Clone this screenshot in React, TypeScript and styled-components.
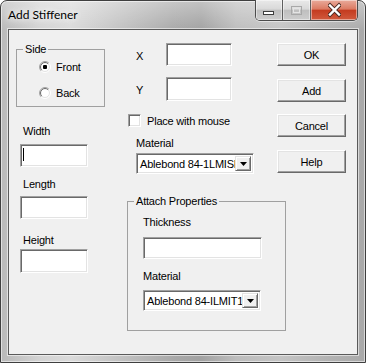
import React from "react";
import styled, { createGlobalStyle } from "styled-components";

const GlobalStyle = createGlobalStyle`
  html, body {
    margin: 0;
    padding: 0;
    background: #ffffff;
  }
  body {
    font-family: "Liberation Sans", Arial, sans-serif;
    font-size: 11px;
    letter-spacing: -0.2px;
    color: #000;
  }
`;

const Window = styled.div`
  width: 366px;
  height: 363px;
  box-sizing: border-box;
  padding: 0 7px 7px;
  display: flex;
  flex-direction: column;
  border: 1px solid #3f3f3f;
  border-radius: 7px 7px 0 0;
  background:
    linear-gradient(180deg, rgba(255, 255, 255, 0.35) 0, rgba(255, 255, 255, 0) 30px),
    linear-gradient(
      90deg,
      #b9b9b9 0,
      #d4d4d4 40px,
      #dadada 70px,
      #c2c2c2 120px,
      #a8a8a8 175px,
      #a2a2a2 200px,
      #bdbdbd 235px,
      #c4c4c4 280px,
      #b2b2b2 330px,
      #a9a9a9 366px
    );
  box-shadow: inset 0 0 0 1px rgba(255, 255, 255, 0.55);
`;

const TitleBar = styled.div`
  height: 28px;
  flex-shrink: 0;
  display: flex;
  align-items: flex-start;
`;

const Title = styled.div`
  flex: 1;
  margin-top: 6px;
  font-family: Lato, "Open Sans", sans-serif;
  font-size: 12px;
  line-height: 16px;
  letter-spacing: 0;
  color: #000;
  text-shadow: 0 0 6px #fff, 0 0 10px rgba(255, 255, 255, 0.9);
`;

const Controls = styled.div`
  display: flex;
  margin-top: -1px;
  height: 20px;
  border: 1px solid #4c4c4c;
  border-top: none;
  border-radius: 0 0 5px 5px;
  overflow: hidden;
  box-shadow: 0 1px 0 rgba(255, 255, 255, 0.5);
`;

const CtrlButton = styled.div<{ $w: number; $close?: boolean }>`
  width: ${(p) => p.$w}px;
  display: flex;
  align-items: center;
  justify-content: center;
  background: ${(p) =>
    p.$close
      ? "linear-gradient(#e9ab9b 0%, #dc7b63 45%, #c43c20 52%, #d15a3d 100%)"
      : "linear-gradient(#e9e9e9 0%, #d9d9d9 45%, #bfbfbf 52%, #cdcdcd 100%)"};
  box-shadow: inset 0 0 0 1px rgba(255, 255, 255, 0.45);

  & + & {
    border-left: 1px solid #5e5e5e;
  }
`;

const Client = styled.div`
  flex: 1;
  box-sizing: border-box;
  background: #f0f0f0;
  border: 1px solid #5a5a5a;
  box-shadow: 0 0 0 1px rgba(255, 255, 255, 0.55);
  display: flex;
  align-items: flex-start;
  padding-top: 13px;
`;

const LeftCol = styled.div`
  width: 118px;
  box-sizing: border-box;
  padding-left: 7px;
  display: flex;
  flex-direction: column;
`;

const CenterCol = styled.div`
  width: 219px;
  display: flex;
  flex-direction: column;
`;

const TopRow = styled.div`
  display: flex;
`;

const MidTop = styled.div`
  width: 150px;
  display: flex;
  flex-direction: column;
`;

const ButtonCol = styled.div`
  width: 69px;
  display: flex;
  flex-direction: column;
`;

const Group = styled.fieldset<{ $w: number; $h: number; $mt?: number }>`
  box-sizing: border-box;
  width: ${(p) => p.$w}px;
  height: ${(p) => p.$h}px;
  margin: ${(p) => p.$mt ?? 0}px 0 0;
  padding: 0;
  border: 1px solid #a0a0a0;
  min-inline-size: 0;
  display: flex;
  flex-direction: column;
`;

const Legend = styled.legend`
  margin-left: 6px;
  padding: 0 2px;
  font-size: 11px;
  line-height: 13px;
`;

const Label = styled.div<{ $mt?: number; $ml?: number }>`
  margin-top: ${(p) => p.$mt ?? 0}px;
  margin-left: ${(p) => p.$ml ?? 0}px;
  font-size: 11px;
  line-height: 13px;
  white-space: nowrap;
`;

const EditBox = styled.div<{ $w: number; $h?: number; $mt?: number; $ml?: number }>`
  box-sizing: border-box;
  width: ${(p) => p.$w}px;
  height: ${(p) => p.$h ?? 23}px;
  margin-top: ${(p) => p.$mt ?? 0}px;
  margin-left: ${(p) => p.$ml ?? 0}px;
  flex-shrink: 0;
  background: #fff;
  border: 1px solid;
  border-color: #a0a0a0 #ffffff #ffffff #a0a0a0;
  box-shadow: inset 1px 1px 0 #696969, inset -1px -1px 0 #e3e3e3;
  padding: 2px 0 0 2px;
`;

const Caret = styled.div`
  width: 1px;
  height: 13px;
  margin-top: 1px;
  background: #000;
`;

const CoordRow = styled.div<{ $mt?: number }>`
  display: flex;
  align-items: flex-start;
  height: 23px;
  margin-top: ${(p) => p.$mt ?? 0}px;
  padding-left: 9px;
`;

const CoordLabel = styled.div`
  width: 30px;
  padding-top: 7px;
  line-height: 13px;
`;

const CheckRow = styled.div`
  display: flex;
  align-items: center;
  height: 13px;
  margin-top: 14px;
  margin-left: 1px;
  gap: 6px;
  white-space: nowrap;
`;

const CheckBox = styled.div`
  box-sizing: border-box;
  width: 13px;
  height: 13px;
  background: #fff;
  border: 1px solid;
  border-color: #a0a0a0 #ffffff #ffffff #a0a0a0;
  box-shadow: inset 1px 1px 0 #696969, inset -1px -1px 0 #e3e3e3;
`;

const RadioRow = styled.div<{ $mt: number }>`
  display: flex;
  align-items: center;
  height: 13px;
  margin-top: ${(p) => p.$mt}px;
  margin-left: 22px;
  gap: 5px;
`;

const Combo = styled.div<{ $w: number; $mt?: number; $ml?: number }>`
  box-sizing: border-box;
  width: ${(p) => p.$w}px;
  height: 21px;
  margin-top: ${(p) => p.$mt ?? 0}px;
  margin-left: ${(p) => p.$ml ?? 0}px;
  display: flex;
  background: #fff;
  border: 1px solid;
  border-color: #a0a0a0 #ffffff #ffffff #a0a0a0;
  box-shadow: inset 1px 1px 0 #696969, inset -1px -1px 0 #e3e3e3;
  padding: 2px;
`;

const ComboText = styled.div`
  flex: 1;
  overflow: hidden;
  white-space: nowrap;
  padding-left: 1px;
  line-height: 16px;
`;

const DropButton = styled.div`
  box-sizing: border-box;
  width: 16px;
  height: 15px;
  flex-shrink: 0;
  display: flex;
  align-items: center;
  justify-content: center;
  background: #f0f0f0;
  border: 1px solid;
  border-color: #e3e3e3 #696969 #696969 #e3e3e3;
  box-shadow: inset 1px 1px 0 #fff, inset -1px -1px 0 #a0a0a0;
`;

const PushButton = styled.div<{ $mt?: number }>`
  box-sizing: border-box;
  width: 69px;
  height: 23px;
  margin-top: ${(p) => p.$mt ?? 0}px;
  display: flex;
  align-items: center;
  justify-content: center;
  background: #f0f0f0;
  border: 1px solid;
  border-color: #ffffff #696969 #696969 #ffffff;
  box-shadow: inset -1px -1px 0 #a0a0a0, inset 1px 1px 0 #e3e3e3;
  font-size: 11px;
`;

function Radio({ checked }: { checked?: boolean }) {
  const o = 5.5 * 0.7071;
  const i = 4.5 * 0.7071;
  return (
    <svg width="12" height="12" viewBox="0 0 12 12">
      <circle cx="6" cy="6" r="5" fill="#fff" />
      <path d={`M${6 - o} ${6 + o} A5.5 5.5 0 0 1 ${6 + o} ${6 - o}`} stroke="#a0a0a0" fill="none" />
      <path d={`M${6 + o} ${6 - o} A5.5 5.5 0 0 1 ${6 - o} ${6 + o}`} stroke="#ffffff" fill="none" />
      <path d={`M${6 - i} ${6 + i} A4.5 4.5 0 0 1 ${6 + i} ${6 - i}`} stroke="#696969" fill="none" />
      <path d={`M${6 + i} ${6 - i} A4.5 4.5 0 0 1 ${6 - i} ${6 + i}`} stroke="#e3e3e3" fill="none" />
      {checked && <rect x="4" y="4" width="4" height="4" rx="1" fill="#000" />}
    </svg>
  );
}

function DownArrow() {
  return (
    <svg width="7" height="4" viewBox="0 0 7 4">
      <path d="M0 0H7L3.5 4Z" fill="#000" />
    </svg>
  );
}

function MinGlyph() {
  return (
    <svg width="12" height="20" viewBox="0 0 12 20">
      <rect x="0.5" y="11.5" width="10" height="3" fill="#fff" stroke="#3c3c3c" />
    </svg>
  );
}

function MaxGlyph() {
  return (
    <svg width="11" height="20" viewBox="0 0 11 20">
      <rect x="0.5" y="6.5" width="10" height="8" fill="none" stroke="#a8a8a8" />
      <rect x="2.5" y="8.5" width="6" height="4" fill="none" stroke="#e4e4e4" />
      <rect x="1.5" y="7.5" width="8" height="1" fill="#e4e4e4" />
    </svg>
  );
}

function CloseGlyph() {
  return (
    <svg width="13" height="20" viewBox="0 0 13 20">
      <path d="M2 5.5L11 14.5M11 5.5L2 14.5" stroke="#4a2a22" strokeWidth="4.2" strokeLinecap="square" />
      <path d="M2 5.5L11 14.5M11 5.5L2 14.5" stroke="#ffffff" strokeWidth="2.4" strokeLinecap="square" />
    </svg>
  );
}

export default function App() {
  return (
    <>
      <GlobalStyle />
      <Window>
        <TitleBar>
          <Title>Add Stiffener</Title>
          <Controls>
            <CtrlButton $w={26}>
              <MinGlyph />
            </CtrlButton>
            <CtrlButton $w={27}>
              <MaxGlyph />
            </CtrlButton>
            <CtrlButton $w={46} $close>
              <CloseGlyph />
            </CtrlButton>
          </Controls>
        </TitleBar>

        <Client>
          <LeftCol>
            <Group $w={89} $h={64}>
              <Legend>Side</Legend>
              <RadioRow $mt={4}>
                <Radio checked />
                <span>Front</span>
              </RadioRow>
              <RadioRow $mt={13}>
                <Radio />
                <span>Back</span>
              </RadioRow>
            </Group>

            <Label $mt={18} $ml={7}>Width</Label>
            <EditBox $w={68} $mt={6} $ml={4}>
              <Caret />
            </EditBox>

            <Label $mt={11} $ml={7}>Length</Label>
            <EditBox $w={68} $mt={5} $ml={4} />

            <Label $mt={15} $ml={7}>Height</Label>
            <EditBox $w={68} $h={24} $mt={2} $ml={4} />
          </LeftCol>

          <CenterCol>
            <TopRow>
              <MidTop>
                <CoordRow>
                  <CoordLabel>X</CoordLabel>
                  <EditBox $w={66} />
                </CoordRow>
                <CoordRow $mt={11}>
                  <CoordLabel>Y</CoordLabel>
                  <EditBox $w={66} $h={24} />
                </CoordRow>
                <CheckRow>
                  <CheckBox />
                  <span>Place with mouse</span>
                </CheckRow>
                <Label $mt={10} $ml={9}>Material</Label>
                <Combo $w={118} $mt={3} $ml={9}>
                  <ComboText>Ablebond 84-1LMISF</ComboText>
                  <DropButton>
                    <DownArrow />
                  </DropButton>
                </Combo>
              </MidTop>

              <ButtonCol>
                <PushButton>OK</PushButton>
                <PushButton $mt={13}>Add</PushButton>
                <PushButton $mt={12}>Cancel</PushButton>
                <PushButton $mt={13}>Help</PushButton>
              </ButtonCol>
            </TopRow>

            <Group $w={159} $h={136} $mt={21}>
              <Legend>Attach Properties</Legend>
              <Label $mt={8} $ml={15}>Thickness</Label>
              <EditBox $w={119} $h={22} $mt={8} $ml={15} />
              <Label $mt={11} $ml={15}>Material</Label>
              <Combo $w={118} $mt={7} $ml={15}>
                <ComboText>Ablebond 84-ILMIT1</ComboText>
                <DropButton>
                  <DownArrow />
                </DropButton>
              </Combo>
            </Group>
          </CenterCol>
        </Client>
      </Window>
    </>
  );
}
